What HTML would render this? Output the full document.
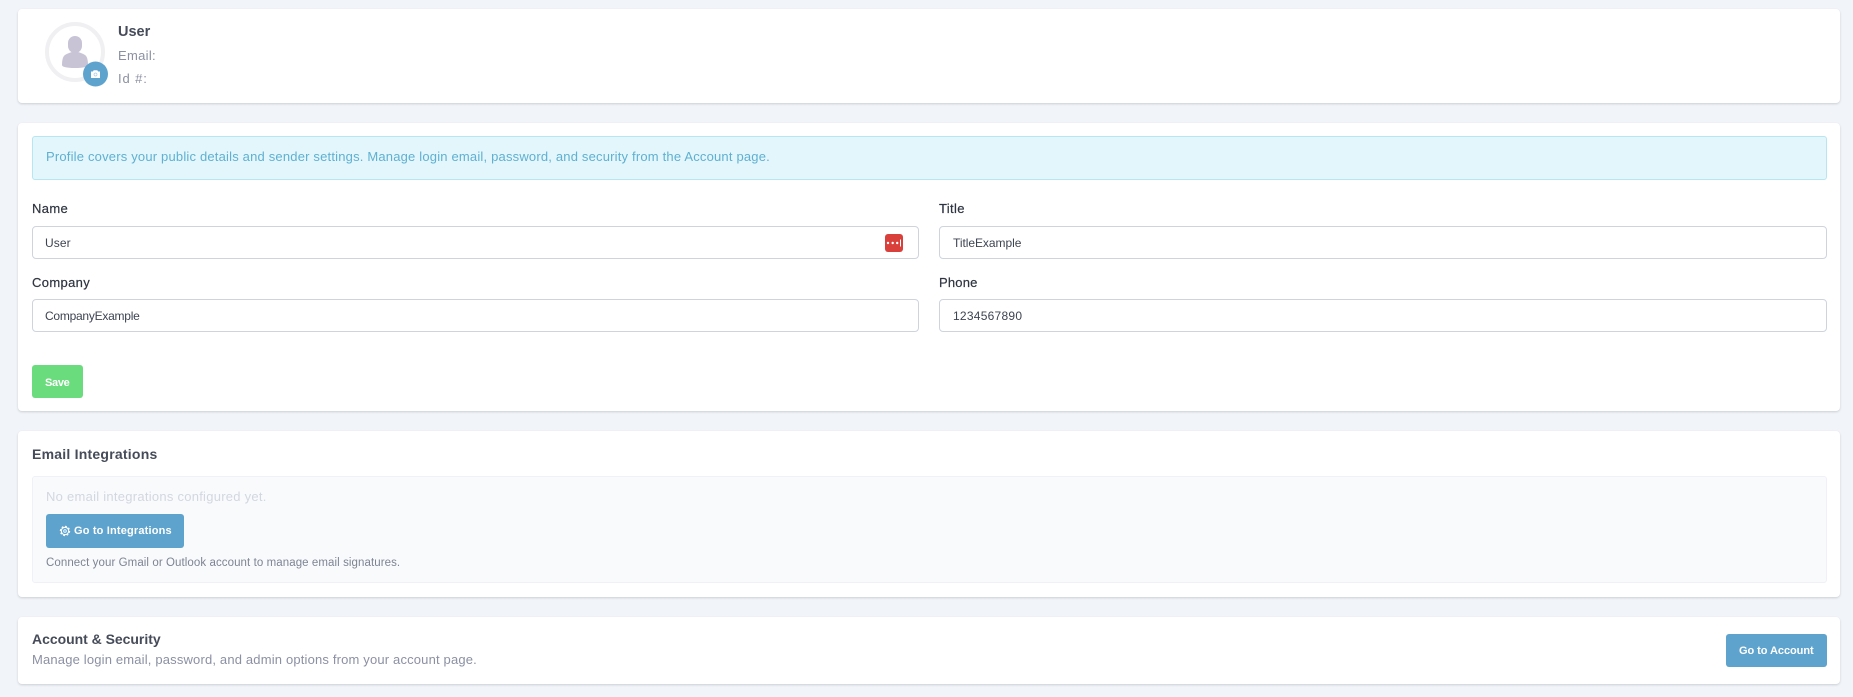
<!DOCTYPE html>
<html lang="en">
<head>
<meta charset="utf-8">
<title>Profile</title>
<style>
html,body{margin:0;padding:0;width:1853px;height:697px;overflow:hidden;background:#f1f4f8;font-family:"Liberation Sans",sans-serif;}
.card{position:absolute;left:18px;width:1822px;background:#fff;border-radius:4px;box-shadow:0 1px 2px rgba(50,60,80,.2);}
.t{position:absolute;white-space:nowrap;line-height:20px;}
.lab{font-size:13px;font-weight:500;color:#2e3440;letter-spacing:.35px;-webkit-text-stroke:.2px #2e3440;}
.inp{position:absolute;box-sizing:border-box;background:#fff;border:1px solid #ced4de;border-radius:4px;height:33px;}
.val{font-size:12px;color:#3d4452;}
.btn{position:absolute;border-radius:3px;background:#5ea3cd;}
.bt{font-size:11px;font-weight:700;color:#fff;}
.h{font-size:14px;font-weight:700;color:#454b58;}
.g{font-size:13px;color:#8b90a3;letter-spacing:.3px;}
</style>
</head>
<body>
<div class="card" style="top:9px;height:94px;"></div>
<div class="card" style="top:123px;height:288px;"></div>
<div class="card" style="top:431px;height:166px;"></div>
<div class="card" style="top:617px;height:67px;"></div>

<!-- avatar -->
<svg style="position:absolute;left:40px;top:18px;" width="72" height="72" viewBox="0 0 72 72">
  <circle cx="35" cy="34" r="28" fill="#fff" stroke="#f0f0f2" stroke-width="4"/>
  <rect x="28" y="18" width="14" height="17" rx="7" fill="#c8c4d6"/>
  <path d="M22 47c0-5.500 1-8.500 3-10 2-1.500 5-2.300 7-3h6c2 .7 5 1.500 7 3 2 1.500 3 4.500 3 10 0 1.800-4 3-13 3s-13-1.200-13-3z" fill="#c8c4d6"/>
  <circle cx="55.500" cy="56" r="12.500" fill="#5ea3cd"/>
  <path d="M51 53.500h1.800l.9-1.200h3.600l.9 1.200H60v6.500h-9z" fill="#fff"/>
  <circle cx="55.500" cy="56.500" r="1.500" fill="none" stroke="#a9cfe6" stroke-width=".7"/>
</svg>
<div class="t h" style="left:118px;top:22px;font-size:14.500px;">User</div>
<div class="t g" style="left:118px;top:46px;">Email:</div>
<div class="t g" style="left:118px;top:69px;letter-spacing:.9px;">Id #:</div>

<!-- alert -->
<div style="position:absolute;box-sizing:border-box;left:32px;top:136px;width:1795px;height:44px;background:#e3f6fb;border:1px solid #b7e6f2;border-radius:3px;"></div>
<div class="t" style="left:46px;top:147px;font-size:13px;color:#5fb0d2;letter-spacing:.19px;">Profile covers your public details and sender settings. Manage login email, password, and security from the Account page.</div>

<!-- form -->
<div class="t lab" style="left:32px;top:199px;">Name</div>
<div class="inp" style="left:32px;top:226px;width:887px;"></div>
<div class="t val" style="left:45px;top:233px;letter-spacing:.1px;">User</div>
<svg style="position:absolute;left:885px;top:234px;" width="18" height="18" viewBox="0 0 18 18">
  <rect width="18" height="18" rx="3" fill="#d9403c"/>
  <circle cx="3" cy="9" r="1.200" fill="#fff"/><circle cx="7.700" cy="9" r="1.200" fill="#fff"/><circle cx="12.200" cy="9" r="1.200" fill="#fff"/>
  <rect x="15" y="5.500" width="1" height="7" fill="#fff"/>
</svg>

<div class="t lab" style="left:939px;top:199px;">Title</div>
<div class="inp" style="left:939px;top:226px;width:888px;"></div>
<div class="t val" style="left:953px;top:233px;letter-spacing:-.05px;">TitleExample</div>

<div class="t lab" style="left:32px;top:273px;">Company</div>
<div class="inp" style="left:32px;top:299px;width:887px;"></div>
<div class="t val" style="left:45px;top:306px;letter-spacing:-.25px;">CompanyExample</div>

<div class="t lab" style="left:939px;top:273px;letter-spacing:.2px;">Phone</div>
<div class="inp" style="left:939px;top:299px;width:888px;"></div>
<div class="t val" style="left:953px;top:306px;letter-spacing:.25px;">1234567890</div>

<div class="btn" style="left:32px;top:365px;width:51px;height:33px;background:#6bdc7e;"></div>
<div class="t bt" style="left:45px;top:373px;letter-spacing:-.3px;">Save</div>

<!-- email integrations -->
<div class="t h" style="left:32px;top:444px;letter-spacing:.23px;">Email Integrations</div>
<div style="position:absolute;box-sizing:border-box;left:32px;top:476px;width:1795px;height:107px;background:#f9fafc;border:1px solid #eff1f6;border-radius:3px;"></div>
<div class="t" style="left:46px;top:487px;font-size:13px;color:#d3d7e0;letter-spacing:.26px;">No email integrations configured yet.</div>
<div class="btn" style="left:46px;top:514px;width:138px;height:34px;"></div>
<svg style="position:absolute;left:59px;top:525px;" width="12" height="12" viewBox="0 0 12 12">
  <circle cx="6" cy="6" r="3.700" fill="none" stroke="#fff" stroke-width="1.100"/>
  <circle cx="6" cy="6" r="4.600" fill="none" stroke="#fff" stroke-width="1.200" stroke-dasharray="1.800 1.800"/>
  <circle cx="6" cy="6" r="1.300" fill="none" stroke="#fff" stroke-width=".9"/>
</svg>
<div class="t bt" style="left:74px;top:521px;letter-spacing:.17px;">Go to Integrations</div>
<div class="t" style="left:46px;top:553px;font-size:11.500px;color:#7e8494;letter-spacing:.08px;">Connect your Gmail or Outlook account to manage email signatures.</div>

<!-- account -->
<div class="t h" style="left:32px;top:629px;letter-spacing:-.03px;">Account &amp; Security</div>
<div class="t g" style="left:32px;top:650px;letter-spacing:.17px;">Manage login email, password, and admin options from your account page.</div>
<div class="btn" style="left:1726px;top:634px;width:101px;height:33px;"></div>
<div class="t bt" style="left:1739px;top:641px;letter-spacing:-.06px;">Go to Account</div>
</body>
</html>
